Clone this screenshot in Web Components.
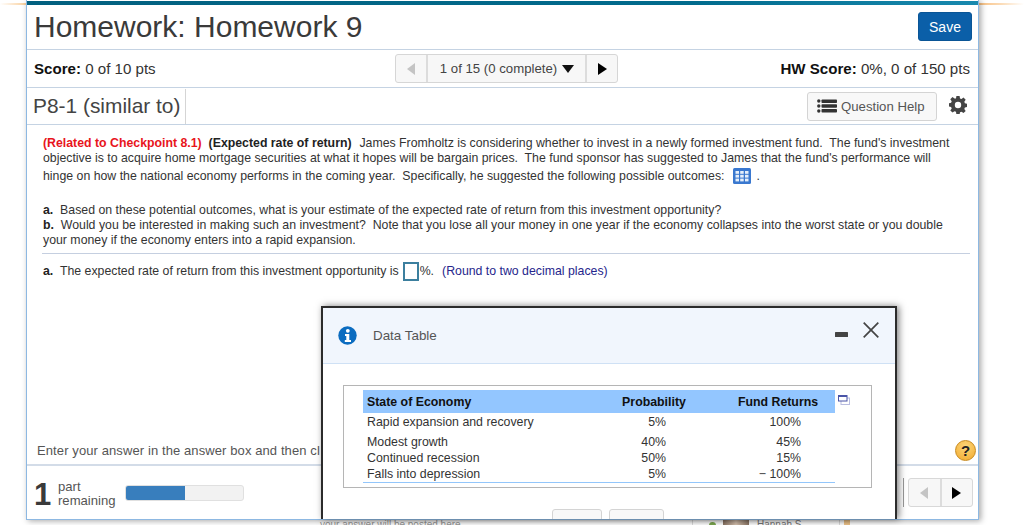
<!DOCTYPE html>
<html>
<head>
<meta charset="utf-8">
<title>Homework</title>
<style>
  html, body { margin: 0; height: 100%; overflow: hidden; }
  body {
    background: #fff;
    font-family: "Liberation Sans", Arial, sans-serif;
    color: #333;
  }
</style>
</head>
<body>
<hw-page>
  <hw-header slot="header" title-text="Homework: Homework 9"></hw-header>
  <hw-score slot="score"></hw-score>
  <hw-question-bar slot="bar"></hw-question-bar>
  <hw-question slot="question"></hw-question>
  <hw-footer slot="footer"></hw-footer>
  <hw-modal slot="modal" heading="Data Table">
    <hw-data-table></hw-data-table>
  </hw-modal>
  <hw-behind slot="behind"></hw-behind>
</hw-page>

<script>
class HwPage extends HTMLElement {
  constructor() {
    super();
    this.attachShadow({ mode: "open" }).innerHTML = `
    <style>
      :host { display: block; height: 525px; overflow: hidden;
        background:
          linear-gradient(90deg, #fff 0, #f9cf9c 100%) 0 3px / 26px 2px no-repeat,
          linear-gradient(90deg, #f8c082 0, #fbdcb8 50%, #fff 100%) 979px 3px / 45px 2px no-repeat;
        padding: 0 45px 0 26px; box-sizing: border-box; }
      .frame { box-sizing: border-box; width: 953px; height: 520px; display: flex; flex-direction: column;
        background: #fff; border: 1px solid #8db8e2; border-top: 0; position: relative; z-index: 1;
        box-shadow: 2px 1px 6px rgba(0,0,0,.35); }
      .strip { height: 4px; margin-top: 1px; background: linear-gradient(90deg, #02607f, #016b8d 70%, #1889ae); }
      .grow { flex: 1; display: flex; flex-direction: column; min-height: 0; }
    </style>
    <div class="frame">
      <div class="strip"></div>
      <slot name="header"></slot>
      <slot name="score"></slot>
      <slot name="bar"></slot>
      <div class="grow"><slot name="question"></slot></div>
      <slot name="footer"></slot>
      <slot name="modal"></slot>
    </div>
    <slot name="behind"></slot>`;
  }
}

class HwHeader extends HTMLElement {
  constructor() {
    super();
    this.attachShadow({ mode: "open" }).innerHTML = `
    <style>
      :host { display: flex; align-items: center; justify-content: space-between; height: 43px;
        padding: 0 6px 1px 7px; border-bottom: 1px solid #c5d3e3; }
      h1 { margin: 0; font-weight: normal; font-size: 30px; color: #3a3a3a; line-height: 42px; }
      button { width: 54px; height: 29px; background: #0b5fa8; color: #fff; border: 1px solid #0a5596;
        border-radius: 3px; font: 14px "Liberation Sans", Arial, sans-serif; padding: 0; }
    </style>
    <h1>${this.getAttribute("title-text")}</h1>
    <button>Save</button>`;
  }
}

class HwScore extends HTMLElement {
  constructor() {
    super();
    this.attachShadow({ mode: "open" }).innerHTML = `
    <style>
      :host { display: grid; grid-template-columns: 361px 223px 1fr; align-items: center; height: 37px;
        padding: 0 8px 0 7px; border-bottom: 1px solid #c5d3e3; font-size: 15.1px; color: #333; }
      b { color: #111; }
      .right { text-align: right; }
      .pager { display: flex; height: 29px; border: 1px solid #d6d6d6; border-radius: 3px;
        background: #f7f7f7; font-size: 13.2px; color: #444; box-sizing: border-box; }
      .pager > div { display: flex; align-items: center; justify-content: center; }
      .prev { width: 32px; border-right: 2px solid #dcdcdc; box-sizing: border-box; }
      .mid { flex: 1; gap: 5px; padding-left: 1px; box-sizing: border-box; }
      .next { width: 32px; border-left: 2px solid #dcdcdc; box-sizing: border-box; }
      .tl { width: 0; height: 0; border: 6px solid transparent; border-left: 0; border-right: 8px solid #c4c4c4; }
      .tr { width: 0; height: 0; border: 6.5px solid transparent; border-right: 0; border-left: 9px solid #000; }
      .td { width: 0; height: 0; border: 6.5px solid transparent; border-bottom: 0; border-top: 8px solid #111; }
    </style>
    <div><b>Score:</b> 0 of 10 pts</div>
    <div class="pager">
      <div class="prev"><span class="tl"></span></div>
      <div class="mid">1 of 15 (0 complete) <span class="td"></span></div>
      <div class="next"><span class="tr"></span></div>
    </div>
    <div class="right"><b>HW Score:</b> 0%, 0 of 150 pts</div>`;
  }
}

class HwQuestionBar extends HTMLElement {
  constructor() {
    super();
    this.attachShadow({ mode: "open" }).innerHTML = `
    <style>
      :host { display: flex; align-items: stretch; justify-content: space-between; height: 36px;
        border-bottom: 1px solid #c5d3e3; }
      .name { font-size: 20.9px; color: #444; padding: 0 5px 0 6px; border-right: 1px solid #d5d5d5;
        line-height: 34px; margin-top: 1px; }
      .tools { display: flex; align-items: center; gap: 12px; padding-right: 11px; }
      .tools > svg { margin-top: -2px; }
      button { display: flex; align-items: center; gap: 4px; width: 130px; height: 29px; padding: 0 0 0 9px; box-sizing: border-box;
        background: #f8f8f8; border: 1px solid #d4d4d4; border-radius: 3px; color: #555;
        font: 13.2px "Liberation Sans", Arial, sans-serif; }
    </style>
    <div class="name">P8-1 (similar to)</div>
    <div class="tools">
      <button>
        <svg width="20" height="14" viewBox="0 0 20 14" fill="#333">
          <circle cx="1.800" cy="2" r="1.700"/><circle cx="1.800" cy="7" r="1.700"/><circle cx="1.800" cy="12" r="1.700"/>
          <rect x="4.500" y="0.500" width="15.500" height="3.600" rx=".8"/><rect x="4.500" y="5.200" width="15.500" height="3.600" rx=".8"/><rect x="4.500" y="9.900" width="15.500" height="3.600" rx=".8"/>
        </svg>
        Question Help
      </button>
      <svg width="18" height="18" viewBox="0 0 18 18">
        <path fill="#444" fill-rule="evenodd" d="M7.400 0h3.200l.4 2.400 1.500.6 2-1.400 2.200 2.200-1.400 2 .6 1.500 2.100.5v3.200l-2.100.4-.6 1.500 1.400 2-2.200 2.200-2-1.400-1.500.6-.4 2.200H7.400L7 15.800l-1.500-.6-2 1.400L1.300 14.400l1.400-2-.6-1.500L0 10.500V7.300l2.100-.5.600-1.500-1.400-2 2.200-2.200 2 1.400L7 2.400zM9 5.800a3.200 3.200 0 1 0 0 6.400 3.200 3.200 0 0 0 0-6.400z"/>
      </svg>
    </div>`;
  }
}

class HwQuestion extends HTMLElement {
  constructor() {
    super();
    this.attachShadow({ mode: "open" }).innerHTML = `
    <style>
      :host { display: flex; flex-direction: column; height: 100%; padding: 11px 8px 0 16px; box-sizing: border-box;
        font-size: 12.32px; color: #333; line-height: 15px; }
      p { margin: 0; white-space: nowrap; }
      b { color: #222; }
      b.lead { margin-right: 1px; }
      .red { color: #e8141c; font-weight: bold; }
      .l3 { line-height: 22px; margin-top: -1px; display: flex; align-items: center; }
      .l3 svg { margin: 0 5px 0 9px; }
      .parts { margin-top: 16px; }
      hr { margin: 5px 0 0 -1px; border: 0; border-top: 1px solid #c5cfe0; }
      .answer { display: flex; align-items: center; margin-top: 6px; height: 22px; }
      .box { width: 12px; height: 15px; border: 2px solid #3c7f9e; margin: 0 1px 0 4px; background: #fff; }
      .hint { color: #26268c; margin-left: 8px; }
      .prompt { margin-top: auto; margin-left: -6px; font-size: 13px; color: #555; height: 26px; line-height: 26px; letter-spacing: .1px; white-space: nowrap; }
      .help { position: absolute; right: 2px; top: 440px; width: 21px; height: 21px; border-radius: 50%;
        background: radial-gradient(circle at 50% 30%, #fcd67a, #f2a92c); border: 1px solid #c78a1e;
        box-sizing: border-box; text-align: center; font: bold 15px/19px "Liberation Sans", Arial, sans-serif; color: #222; }
    </style>
    <p><span class="red">(Related to Checkpoint 8.1)</span>&nbsp; <b class="lead">(Expected rate of return)</b>&nbsp; James Fromholtz is considering whether to invest in a newly formed investment fund.&nbsp; The fund's investment</p>
    <p>objective is to acquire home mortgage securities at what it hopes will be bargain prices.&nbsp; The fund sponsor has suggested to James that the fund's performance will</p>
    <p class="l3">hinge on how the national economy performs in the coming year.&nbsp; Specifically, he suggested the following possible outcomes:
      <svg width="18" height="16" viewBox="0 0 18 16"><rect width="18" height="16" rx="1.500" fill="#3a78cf"/><g fill="#e6effa"><rect x="2.500" y="3" width="3.500" height="2.800"/><rect x="7.200" y="3" width="3.500" height="2.800"/><rect x="12" y="3" width="3.500" height="2.800"/><rect x="2.500" y="6.800" width="3.500" height="2.800"/><rect x="7.200" y="6.800" width="3.500" height="2.800"/><rect x="12" y="6.800" width="3.500" height="2.800"/><rect x="2.500" y="10.600" width="3.500" height="2.800"/><rect x="7.200" y="10.600" width="3.500" height="2.800"/><rect x="12" y="10.600" width="3.500" height="2.800"/></g></svg>.</p>
    <div class="parts">
      <p><b>a.</b>&nbsp; Based on these potential outcomes, what is your estimate of the expected rate of return from this investment opportunity?</p>
      <p><b>b.</b>&nbsp; Would you be interested in making such an investment?&nbsp; Note that you lose all your money in one year if the economy collapses into the worst state or you double</p>
      <p>your money if the economy enters into a rapid expansion.</p>
    </div>
    <hr>
    <div class="answer"><span><b>a.</b>&nbsp; The expected rate of return from this investment opportunity is</span><span class="box"></span><span>%.</span><span class="hint">(Round to two decimal places)</span></div>
    <div class="prompt">Enter your answer in the answer box and then cl</div>
    <div class="help">?</div>`;
  }
}

class HwFooter extends HTMLElement {
  constructor() {
    super();
    this.attachShadow({ mode: "open" }).innerHTML = `
    <style>
      :host { display: flex; align-items: center; height: 55px; box-sizing: border-box; border-top: 2px solid #d3dce8;
        padding: 0 5px 0 7px; color: #555; }
      .num { font: bold 31px/1 "Liberation Sans", Arial, sans-serif; color: #3a3a3a; width: 24px; margin-top: 3px; }
      .txt { font-size: 13.1px; line-height: 14px; width: 67px; margin-top: 2px; }
      .bar { width: 119px; height: 16px; border-radius: 3px; background: #f2f2f2; border: 1px solid #e0e0e0; overflow: hidden; box-sizing: border-box; }
      .bar i { display: block; width: 50%; height: 100%; background: #387ebd; }
      .pager { margin-left: auto; display: flex; align-items: center; gap: 4px; }
      .sep { width: 1px; height: 29px; background: #999; }
      .btns { display: flex; width: 65px; height: 29px; box-sizing: border-box; border: 1px solid #d8d8d8; border-radius: 3px; background: #f7f7f7; }
      .btns div { flex: 1; display: flex; align-items: center; justify-content: center; }
      .btns div + div { border-left: 2px solid #dcdcdc; }
      .tl { width: 0; height: 0; border: 6px solid transparent; border-left: 0; border-right: 8px solid #c4c4c4; }
      .tr { width: 0; height: 0; border: 6.500px solid transparent; border-right: 0; border-left: 9px solid #000; }
    </style>
    <div class="num">1</div>
    <div class="txt">part<br>remaining</div>
    <div class="bar"><i></i></div>
    <div class="pager"><span class="sep"></span>
      <div class="btns"><div><span class="tl"></span></div><div><span class="tr"></span></div></div>
    </div>`;
  }
}

class HwModal extends HTMLElement {
  constructor() {
    super();
    this.attachShadow({ mode: "open" }).innerHTML = `
    <style>
      :host { position: absolute; left: 294px; top: 306px; width: 576px; height: 213px; box-sizing: border-box;
        border: 2px solid #2b2b2b; border-bottom: 0; background: #fff; overflow: hidden;
        box-shadow: 2px 0 7px rgba(0,0,0,.5); display: flex; flex-direction: column; }
      .head { height: 56px; flex: none; box-sizing: border-box; background: #f1f6fd; border-bottom: 1px solid #cfe1f5; display: flex;
        align-items: center; padding: 0 16px 0 15px; color: #555; font-size: 13.4px; }
      .title { margin-left: 16px; }
      .ctl { margin-left: auto; display: flex; align-items: center; gap: 15px; margin-top: -11px; }
      .body { padding: 21px 23px 0 20px; }
      .foot { display: flex; gap: 7px; padding: 21px 0 0 229px; }
      .foot span { width: 50px; height: 26px; box-sizing: border-box; border: 1px solid #d4d4d4; border-radius: 3px; background: #f8f8f8;
        font-size: 12px; color: #555; text-align: center; line-height: 22px; padding-top: 4px; }
      .foot span + span { width: 55px; }
    </style>
    <div class="head">
      <svg width="19" height="19" viewBox="0 0 19 19"><circle cx="9.500" cy="9.500" r="9.200" fill="#0b6cc0"/><circle cx="9.800" cy="4.800" r="1.900" fill="#fff"/><path d="M7 8h4.300v6H13v2H6.800v-2h1.500v-4H7z" fill="#fff"/></svg>
      <span class="title">${this.getAttribute("heading")}</span>
      <div class="ctl">
        <svg width="13" height="5" viewBox="0 0 13 5" style="margin-top:8px"><rect width="13" height="5" rx=".5" fill="#444"/></svg>
        <svg width="16" height="16" viewBox="0 0 16 16"><path d="M.7.7l14.600 14.600M15.300.7L.7 15.300" stroke="#444" stroke-width="1.700" fill="none"/></svg>
      </div>
    </div>
    <div class="body"><slot></slot></div>
    <div class="foot"><span>Print</span><span>Done</span></div>`;
  }
}

class HwDataTable extends HTMLElement {
  constructor() {
    super();
    const rows = [
      ["Rapid expansion and recovery", "5%", "100%"],
      ["Modest growth", "40%", "45%"],
      ["Continued recession", "50%", "15%"],
      ["Falls into depression", "5%", "\u2212 100%"]
    ];
    this.attachShadow({ mode: "open" }).innerHTML = `
    <style>
      :host { display: block; position: relative; height: 103px; box-sizing: border-box; border: 1px solid #b5b5b5;
        padding: 4px 0 0 19px; font-size: 12.35px; color: #333; }
      table { border-collapse: collapse; width: 472px; table-layout: fixed; border-bottom: 1px solid #93c6fb; }
      col.a { width: 248px; } col.b { width: 86px; }
      th { background: #93c6ff; color: #111; height: 23px; padding: 0; font-size: 12.35px; }
      th:first-child { text-align: left; padding-left: 4px; }
      th:last-child { padding-left: 24px; }
      td { padding: 0; height: 16px; line-height: 14px; }
      tr:first-child td { padding-bottom: 3px; height: 21px; box-sizing: border-box; }
      td:first-child { padding-left: 4px; }
      td.n { text-align: right; }
      td.p span { display: block; width: 55px; }
      td.r span { display: block; width: 104px; }
      svg { position: absolute; left: 494px; top: 9px; }
    </style>
    <table>
      <colgroup><col class="a"><col class="b"><col></colgroup>
      <thead><tr><th>State of Economy</th><th>Probability</th><th>Fund Returns</th></tr></thead>
      <tbody>${rows.map(r => `<tr><td>${r[0]}</td><td class="n p"><span>${r[1]}</span></td><td class="n r"><span>${r[2]}</span></td></tr>`).join("")}</tbody>
    </table>
    <svg width="12" height="10" viewBox="0 0 12 10" fill="none"><rect x="3" y="3" width="8.500" height="6.500" stroke="#b9bde0"/><rect x=".5" y=".5" width="8.500" height="5.500" fill="#fff" stroke="#4b55a8"/><rect x=".5" y=".5" width="8.500" height="1.500" fill="#4b55a8"/></svg>`;
  }
}

// the page behind the homework window, only its top edge shows
class HwBehind extends HTMLElement {
  constructor() {
    super();
    this.attachShadow({ mode: "open" }).innerHTML = `
    <style>
      :host { display: flex; width: 953px; height: 5px; overflow: hidden; font-size: 10px; line-height: 10px; color: #999; }
      .note { margin-left: 294px; width: 372px; white-space: nowrap; }
      .line { width: 1px; background: #ddd; }
      .dot { width: 7px; height: 7px; border-radius: 50%; background: #7da84f; margin: 2px 0 0 16px; }
      .photo { width: 26px; background: linear-gradient(90deg, #8a7463, #d8c3b0, #8a7463); margin-left: 7px; }
      .who { margin-left: 8px; width: 82px; color: #777; white-space: nowrap; }
      .flag { width: 6px; height: 5px; background: #f0c48a; margin-left: 4px; }
    </style>
    <span class="note">your answer will be posted here</span>
    <span class="line"></span>
    <span class="dot"></span>
    <span class="photo"></span>
    <span class="who">Hannah S.</span>
    <span class="line"></span>
    <span class="flag"></span>`;
  }
}

customElements.define("hw-page", HwPage);
customElements.define("hw-header", HwHeader);
customElements.define("hw-score", HwScore);
customElements.define("hw-question-bar", HwQuestionBar);
customElements.define("hw-question", HwQuestion);
customElements.define("hw-footer", HwFooter);
customElements.define("hw-modal", HwModal);
customElements.define("hw-data-table", HwDataTable);
customElements.define("hw-behind", HwBehind);
</script>
</body>
</html>
